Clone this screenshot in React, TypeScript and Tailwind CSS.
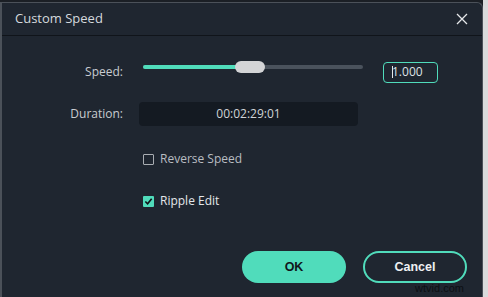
import { useState } from 'react';

export default function App() {
  const [reverse, setReverse] = useState(false);
  const [ripple, setRipple] = useState(true);
  const speed = 0.48; // fraction of track filled

  return (
    <div className="w-[488px] h-[297px] bg-[#1b1f25] flex overflow-hidden" style={{ fontFamily: '"Open Sans", "Noto Sans", sans-serif' }}>
      <div className="w-[2px] bg-[#4b5159] mt-[2px]" />
      <div className="flex-1 flex flex-col mt-[2px] bg-[#1f2630] border-t border-r border-[#4b5159] rounded-tr-md relative">
        {/* Title bar */}
        <div className="h-[33px] flex items-center justify-between pl-[13px] pr-[14px] border-b border-[#10141a]">
          <span className="text-[13px] text-[#d5d9de]">Custom Speed</span>
          <svg width="12" height="12" viewBox="0 0 12 12" className="text-[#e6e8ea]">
            <path d="M1 1 L11 11 M11 1 L1 11" stroke="currentColor" strokeWidth="1.3" />
          </svg>
        </div>

        {/* Speed */}
        <div className="flex items-center mt-[25px] h-[22px]">
          <span className="w-[121px] text-right text-[12px] text-[#c8ccd1]">Speed:</span>
          <div className="ml-[20px] w-[220px] h-[4px] rounded-full bg-[#4a525c] relative top-[-5px]">
            <div className="h-full rounded-full bg-[#50dcbb]" style={{ width: `${speed * 100}%` }} />
            <div className="absolute top-[-4px] w-[30px] h-[12px] rounded-full bg-[#d3d4d6]" style={{ left: `calc(${speed * 100}% - 14px)` }} />
          </div>
          <div className="ml-[20px] w-[55px] h-[21px] border border-[#50dcbb] rounded-[4px] flex items-center pl-[8px] text-[12px] text-[#dde1e5]">
            <span className="w-px h-[12px] bg-[#e6e8ea] mr-[-1px]" />1.000
          </div>
        </div>

        {/* Duration */}
        <div className="flex items-center mt-[19px] h-[24px]">
          <span className="w-[121px] text-right text-[12px] text-[#c8ccd1]">Duration:</span>
          <div className="ml-[16px] w-[219px] h-[24px] rounded-[4px] bg-[#141a22] flex items-center justify-center text-[12px] text-[#d0d4d8]">
            00:02:29:01
          </div>
        </div>

        {/* Checkboxes */}
        <label className="flex items-center ml-[141px] mt-[24px] gap-[6px] cursor-pointer" onClick={() => setReverse(!reverse)}>
          <span className={`w-[11px] h-[11px] rounded-[1px] flex items-center justify-center ${reverse ? 'bg-[#50dcbb]' : 'border border-[#a9adb2]'}`}>
            {reverse && (
              <svg width="9" height="9" viewBox="0 0 10 10"><path d="M1.5 5 L4 7.5 L8.5 2" fill="none" stroke="#0e1116" strokeWidth="1.8" /></svg>
            )}
          </span>
          <span className="text-[12px] text-[#b9bdc2]">Reverse Speed</span>
        </label>

        <label className="flex items-center ml-[141px] mt-[24px] gap-[6px] cursor-pointer" onClick={() => setRipple(!ripple)}>
          <span className={`w-[11px] h-[11px] rounded-[1px] flex items-center justify-center ${ripple ? 'bg-[#50dcbb]' : 'border border-[#a9adb2]'}`}>
            {ripple && (
              <svg width="9" height="9" viewBox="0 0 10 10"><path d="M1.5 5 L4 7.5 L8.5 2" fill="none" stroke="#0e1116" strokeWidth="1.8" /></svg>
            )}
          </span>
          <span className="text-[12px] text-[#e4e7ea]">Ripple Edit</span>
        </label>

        {/* Buttons */}
        <div className="flex justify-end gap-[17px] mt-[41px] pr-[15px]" style={{ fontFamily: '"Liberation Sans", Arial, sans-serif' }}>
          <button className="w-[104px] h-[32px] rounded-full bg-[#50dcbb] text-[12.5px] font-bold text-[#10151b]">OK</button>
          <button className="w-[104px] h-[32px] rounded-full border-2 border-[#50dcbb] text-[12.5px] font-bold text-[#eef0f2]">Cancel</button>
        </div>

        <span className="absolute right-[18px] bottom-[3px] text-[11px] leading-[12px] text-[#0c0f13]" style={{ fontFamily: '"Liberation Sans", Arial, sans-serif' }}>wtvid.com</span>
      </div>
      <div className="w-[5px] bg-[#d9dadb]" />
    </div>
  );
}
